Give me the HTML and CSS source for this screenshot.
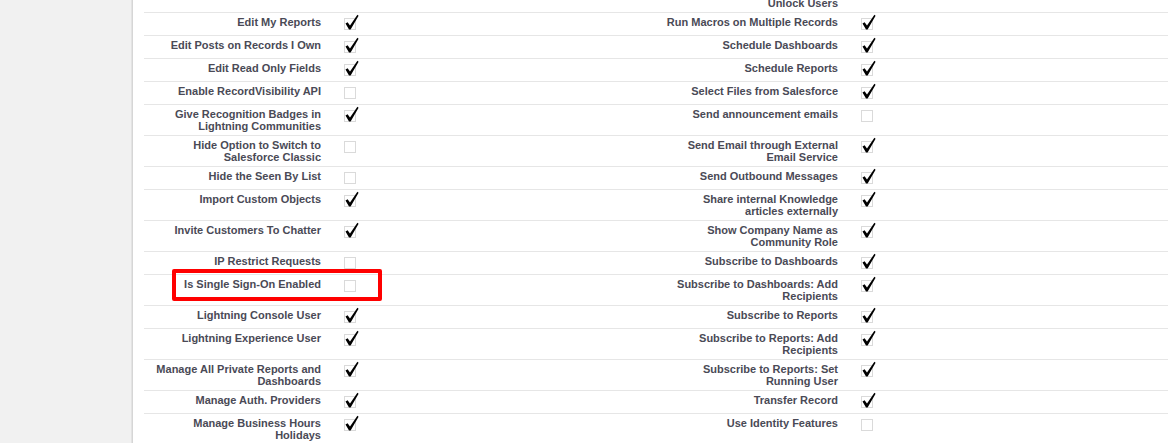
FILE: index.html
```html
<html lang="en">
  <head>
    <link rel="stylesheet" href="styles.css">
  </head>
  <body>
    <div id="sidebar"></div>
    <div id="main">
      <table class="detail-list">
        <tbody>
          <tr>
            <td class="label-col"></td>
            <td class="data-col"></td>
            <td class="label-col">Reset User Passwords and Unlock Users</td>
            <td class="data-col"><svg class="cb" viewBox="0 0 16 16"><rect x="0.5" y="2.5" width="11" height="11"/><polygon points="1.5,7.5 3.6,6.2 6,9.6 13.4,-1.2 14.6,-0.2 6.6,13.6 5,13.6"/></svg></td>
          </tr>
          <tr>
            <td class="label-col">Edit My Reports</td>
            <td class="data-col"><svg class="cb" viewBox="0 0 16 16"><rect x="0.5" y="2.5" width="11" height="11"/><polygon points="1.5,7.5 3.6,6.2 6,9.6 13.4,-1.2 14.6,-0.2 6.6,13.6 5,13.6"/></svg></td>
            <td class="label-col">Run Macros on Multiple Records</td>
            <td class="data-col"><svg class="cb" viewBox="0 0 16 16"><rect x="0.5" y="2.5" width="11" height="11"/><polygon points="1.5,7.5 3.6,6.2 6,9.6 13.4,-1.2 14.6,-0.2 6.6,13.6 5,13.6"/></svg></td>
          </tr>
          <tr>
            <td class="label-col">Edit Posts on Records I Own</td>
            <td class="data-col"><svg class="cb" viewBox="0 0 16 16"><rect x="0.5" y="2.5" width="11" height="11"/><polygon points="1.5,7.5 3.6,6.2 6,9.6 13.4,-1.2 14.6,-0.2 6.6,13.6 5,13.6"/></svg></td>
            <td class="label-col">Schedule Dashboards</td>
            <td class="data-col"><svg class="cb" viewBox="0 0 16 16"><rect x="0.5" y="2.5" width="11" height="11"/><polygon points="1.5,7.5 3.6,6.2 6,9.6 13.4,-1.2 14.6,-0.2 6.6,13.6 5,13.6"/></svg></td>
          </tr>
          <tr>
            <td class="label-col">Edit Read Only Fields</td>
            <td class="data-col"><svg class="cb" viewBox="0 0 16 16"><rect x="0.5" y="2.5" width="11" height="11"/><polygon points="1.5,7.5 3.6,6.2 6,9.6 13.4,-1.2 14.6,-0.2 6.6,13.6 5,13.6"/></svg></td>
            <td class="label-col">Schedule Reports</td>
            <td class="data-col"><svg class="cb" viewBox="0 0 16 16"><rect x="0.5" y="2.5" width="11" height="11"/><polygon points="1.5,7.5 3.6,6.2 6,9.6 13.4,-1.2 14.6,-0.2 6.6,13.6 5,13.6"/></svg></td>
          </tr>
          <tr>
            <td class="label-col">Enable RecordVisibility API</td>
            <td class="data-col"><svg class="cb" viewBox="0 0 16 16"><rect x="0.5" y="2.5" width="11" height="11"/></svg></td>
            <td class="label-col">Select Files from Salesforce</td>
            <td class="data-col"><svg class="cb" viewBox="0 0 16 16"><rect x="0.5" y="2.5" width="11" height="11"/><polygon points="1.5,7.5 3.6,6.2 6,9.6 13.4,-1.2 14.6,-0.2 6.6,13.6 5,13.6"/></svg></td>
          </tr>
          <tr>
            <td class="label-col">Give Recognition Badges in Lightning Communities</td>
            <td class="data-col"><svg class="cb" viewBox="0 0 16 16"><rect x="0.5" y="2.5" width="11" height="11"/><polygon points="1.5,7.5 3.6,6.2 6,9.6 13.4,-1.2 14.6,-0.2 6.6,13.6 5,13.6"/></svg></td>
            <td class="label-col">Send announcement emails</td>
            <td class="data-col"><svg class="cb" viewBox="0 0 16 16"><rect x="0.5" y="2.5" width="11" height="11"/></svg></td>
          </tr>
          <tr>
            <td class="label-col">Hide Option to Switch to Salesforce Classic</td>
            <td class="data-col"><svg class="cb" viewBox="0 0 16 16"><rect x="0.5" y="2.5" width="11" height="11"/></svg></td>
            <td class="label-col">Send Email through External Email Service</td>
            <td class="data-col"><svg class="cb" viewBox="0 0 16 16"><rect x="0.5" y="2.5" width="11" height="11"/><polygon points="1.5,7.5 3.6,6.2 6,9.6 13.4,-1.2 14.6,-0.2 6.6,13.6 5,13.6"/></svg></td>
          </tr>
          <tr>
            <td class="label-col">Hide the Seen By List</td>
            <td class="data-col"><svg class="cb" viewBox="0 0 16 16"><rect x="0.5" y="2.5" width="11" height="11"/></svg></td>
            <td class="label-col">Send Outbound Messages</td>
            <td class="data-col"><svg class="cb" viewBox="0 0 16 16"><rect x="0.5" y="2.5" width="11" height="11"/><polygon points="1.5,7.5 3.6,6.2 6,9.6 13.4,-1.2 14.6,-0.2 6.6,13.6 5,13.6"/></svg></td>
          </tr>
          <tr>
            <td class="label-col">Import Custom Objects</td>
            <td class="data-col"><svg class="cb" viewBox="0 0 16 16"><rect x="0.5" y="2.5" width="11" height="11"/><polygon points="1.5,7.5 3.6,6.2 6,9.6 13.4,-1.2 14.6,-0.2 6.6,13.6 5,13.6"/></svg></td>
            <td class="label-col">Share internal Knowledge articles externally</td>
            <td class="data-col"><svg class="cb" viewBox="0 0 16 16"><rect x="0.5" y="2.5" width="11" height="11"/><polygon points="1.5,7.5 3.6,6.2 6,9.6 13.4,-1.2 14.6,-0.2 6.6,13.6 5,13.6"/></svg></td>
          </tr>
          <tr>
            <td class="label-col">Invite Customers To Chatter</td>
            <td class="data-col"><svg class="cb" viewBox="0 0 16 16"><rect x="0.5" y="2.5" width="11" height="11"/><polygon points="1.5,7.5 3.6,6.2 6,9.6 13.4,-1.2 14.6,-0.2 6.6,13.6 5,13.6"/></svg></td>
            <td class="label-col">Show Company Name as Community Role</td>
            <td class="data-col"><svg class="cb" viewBox="0 0 16 16"><rect x="0.5" y="2.5" width="11" height="11"/><polygon points="1.5,7.5 3.6,6.2 6,9.6 13.4,-1.2 14.6,-0.2 6.6,13.6 5,13.6"/></svg></td>
          </tr>
          <tr>
            <td class="label-col">IP Restrict Requests</td>
            <td class="data-col"><svg class="cb" viewBox="0 0 16 16"><rect x="0.5" y="2.5" width="11" height="11"/></svg></td>
            <td class="label-col">Subscribe to Dashboards</td>
            <td class="data-col"><svg class="cb" viewBox="0 0 16 16"><rect x="0.5" y="2.5" width="11" height="11"/><polygon points="1.5,7.5 3.6,6.2 6,9.6 13.4,-1.2 14.6,-0.2 6.6,13.6 5,13.6"/></svg></td>
          </tr>
          <tr>
            <td class="label-col">Is Single Sign-On Enabled</td>
            <td class="data-col"><svg class="cb" viewBox="0 0 16 16"><rect x="0.5" y="2.5" width="11" height="11"/></svg></td>
            <td class="label-col">Subscribe to Dashboards: Add Recipients</td>
            <td class="data-col"><svg class="cb" viewBox="0 0 16 16"><rect x="0.5" y="2.5" width="11" height="11"/><polygon points="1.5,7.5 3.6,6.2 6,9.6 13.4,-1.2 14.6,-0.2 6.6,13.6 5,13.6"/></svg></td>
          </tr>
          <tr>
            <td class="label-col">Lightning Console User</td>
            <td class="data-col"><svg class="cb" viewBox="0 0 16 16"><rect x="0.5" y="2.5" width="11" height="11"/><polygon points="1.5,7.5 3.6,6.2 6,9.6 13.4,-1.2 14.6,-0.2 6.6,13.6 5,13.6"/></svg></td>
            <td class="label-col">Subscribe to Reports</td>
            <td class="data-col"><svg class="cb" viewBox="0 0 16 16"><rect x="0.5" y="2.5" width="11" height="11"/><polygon points="1.5,7.5 3.6,6.2 6,9.6 13.4,-1.2 14.6,-0.2 6.6,13.6 5,13.6"/></svg></td>
          </tr>
          <tr>
            <td class="label-col">Lightning Experience User</td>
            <td class="data-col"><svg class="cb" viewBox="0 0 16 16"><rect x="0.5" y="2.5" width="11" height="11"/><polygon points="1.5,7.5 3.6,6.2 6,9.6 13.4,-1.2 14.6,-0.2 6.6,13.6 5,13.6"/></svg></td>
            <td class="label-col">Subscribe to Reports: Add Recipients</td>
            <td class="data-col"><svg class="cb" viewBox="0 0 16 16"><rect x="0.5" y="2.5" width="11" height="11"/><polygon points="1.5,7.5 3.6,6.2 6,9.6 13.4,-1.2 14.6,-0.2 6.6,13.6 5,13.6"/></svg></td>
          </tr>
          <tr>
            <td class="label-col">Manage All Private Reports and Dashboards</td>
            <td class="data-col"><svg class="cb" viewBox="0 0 16 16"><rect x="0.5" y="2.5" width="11" height="11"/><polygon points="1.5,7.5 3.6,6.2 6,9.6 13.4,-1.2 14.6,-0.2 6.6,13.6 5,13.6"/></svg></td>
            <td class="label-col">Subscribe to Reports: Set Running User</td>
            <td class="data-col"><svg class="cb" viewBox="0 0 16 16"><rect x="0.5" y="2.5" width="11" height="11"/><polygon points="1.5,7.5 3.6,6.2 6,9.6 13.4,-1.2 14.6,-0.2 6.6,13.6 5,13.6"/></svg></td>
          </tr>
          <tr>
            <td class="label-col">Manage Auth. Providers</td>
            <td class="data-col"><svg class="cb" viewBox="0 0 16 16"><rect x="0.5" y="2.5" width="11" height="11"/><polygon points="1.5,7.5 3.6,6.2 6,9.6 13.4,-1.2 14.6,-0.2 6.6,13.6 5,13.6"/></svg></td>
            <td class="label-col">Transfer Record</td>
            <td class="data-col"><svg class="cb" viewBox="0 0 16 16"><rect x="0.5" y="2.5" width="11" height="11"/><polygon points="1.5,7.5 3.6,6.2 6,9.6 13.4,-1.2 14.6,-0.2 6.6,13.6 5,13.6"/></svg></td>
          </tr>
          <tr>
            <td class="label-col">Manage Business Hours Holidays</td>
            <td class="data-col"><svg class="cb" viewBox="0 0 16 16"><rect x="0.5" y="2.5" width="11" height="11"/><polygon points="1.5,7.5 3.6,6.2 6,9.6 13.4,-1.2 14.6,-0.2 6.6,13.6 5,13.6"/></svg></td>
            <td class="label-col">Use Identity Features</td>
            <td class="data-col"><svg class="cb" viewBox="0 0 16 16"><rect x="0.5" y="2.5" width="11" height="11"/></svg></td>
          </tr>
        </tbody>
      </table>
      <div class="highlight"></div>
    </div>
  </body>
</html>
```

FILE: styles.css
```css
body, html {
  margin: 0;
  height: 100%;
  overflow: hidden;
  background: #fff;
  font-family: "Liberation Sans", Arial, sans-serif;
}
body {
  display: flex;
}
#sidebar {
  width: 131px;
  flex: none;
  background: #f1f1f1;
  border-right: 1px solid #e3e3e3;
  box-shadow: 1px 0 0 #d6d6d6;
}
#main {
  flex: 1;
  position: relative;
  padding-left: 12px;
  overflow: hidden;
}
.detail-list {
  width: 100%;
  margin-top: -18px;
  border-collapse: collapse;
  table-layout: fixed;
}
.detail-list td {
  border-bottom: 1px solid #e6e6e6;
  vertical-align: top;
  padding-top: 3px;
  padding-bottom: 3px;
}
.detail-list td:nth-child(1), .detail-list td:nth-child(3) {
  width: 173px;
}
.detail-list td:nth-child(2) {
  width: 317px;
}
.label-col {
  padding-left: 4px;
  padding-right: 10px;
  text-align: right;
  color: #4a4a56;
  font-size: 11px;
  font-weight: bold;
  line-height: 12px;
}
.data-col {
  padding-left: 13px;
  padding-right: 0;
}
.cb {
  display: block;
  width: 16px;
  height: 16px;
  overflow: visible;
}
.cb rect {
  fill: #fff;
  stroke: #b4b4b4;
  stroke-width: 1;
  stroke-dasharray: 1 1;
}
.cb polygon {
  fill: #000;
}
.highlight {
  position: absolute;
  left: 40px;
  top: 269px;
  width: 210px;
  height: 32px;
  box-sizing: border-box;
  border: 4px solid #f00;
  border-radius: 2px;
}
```
